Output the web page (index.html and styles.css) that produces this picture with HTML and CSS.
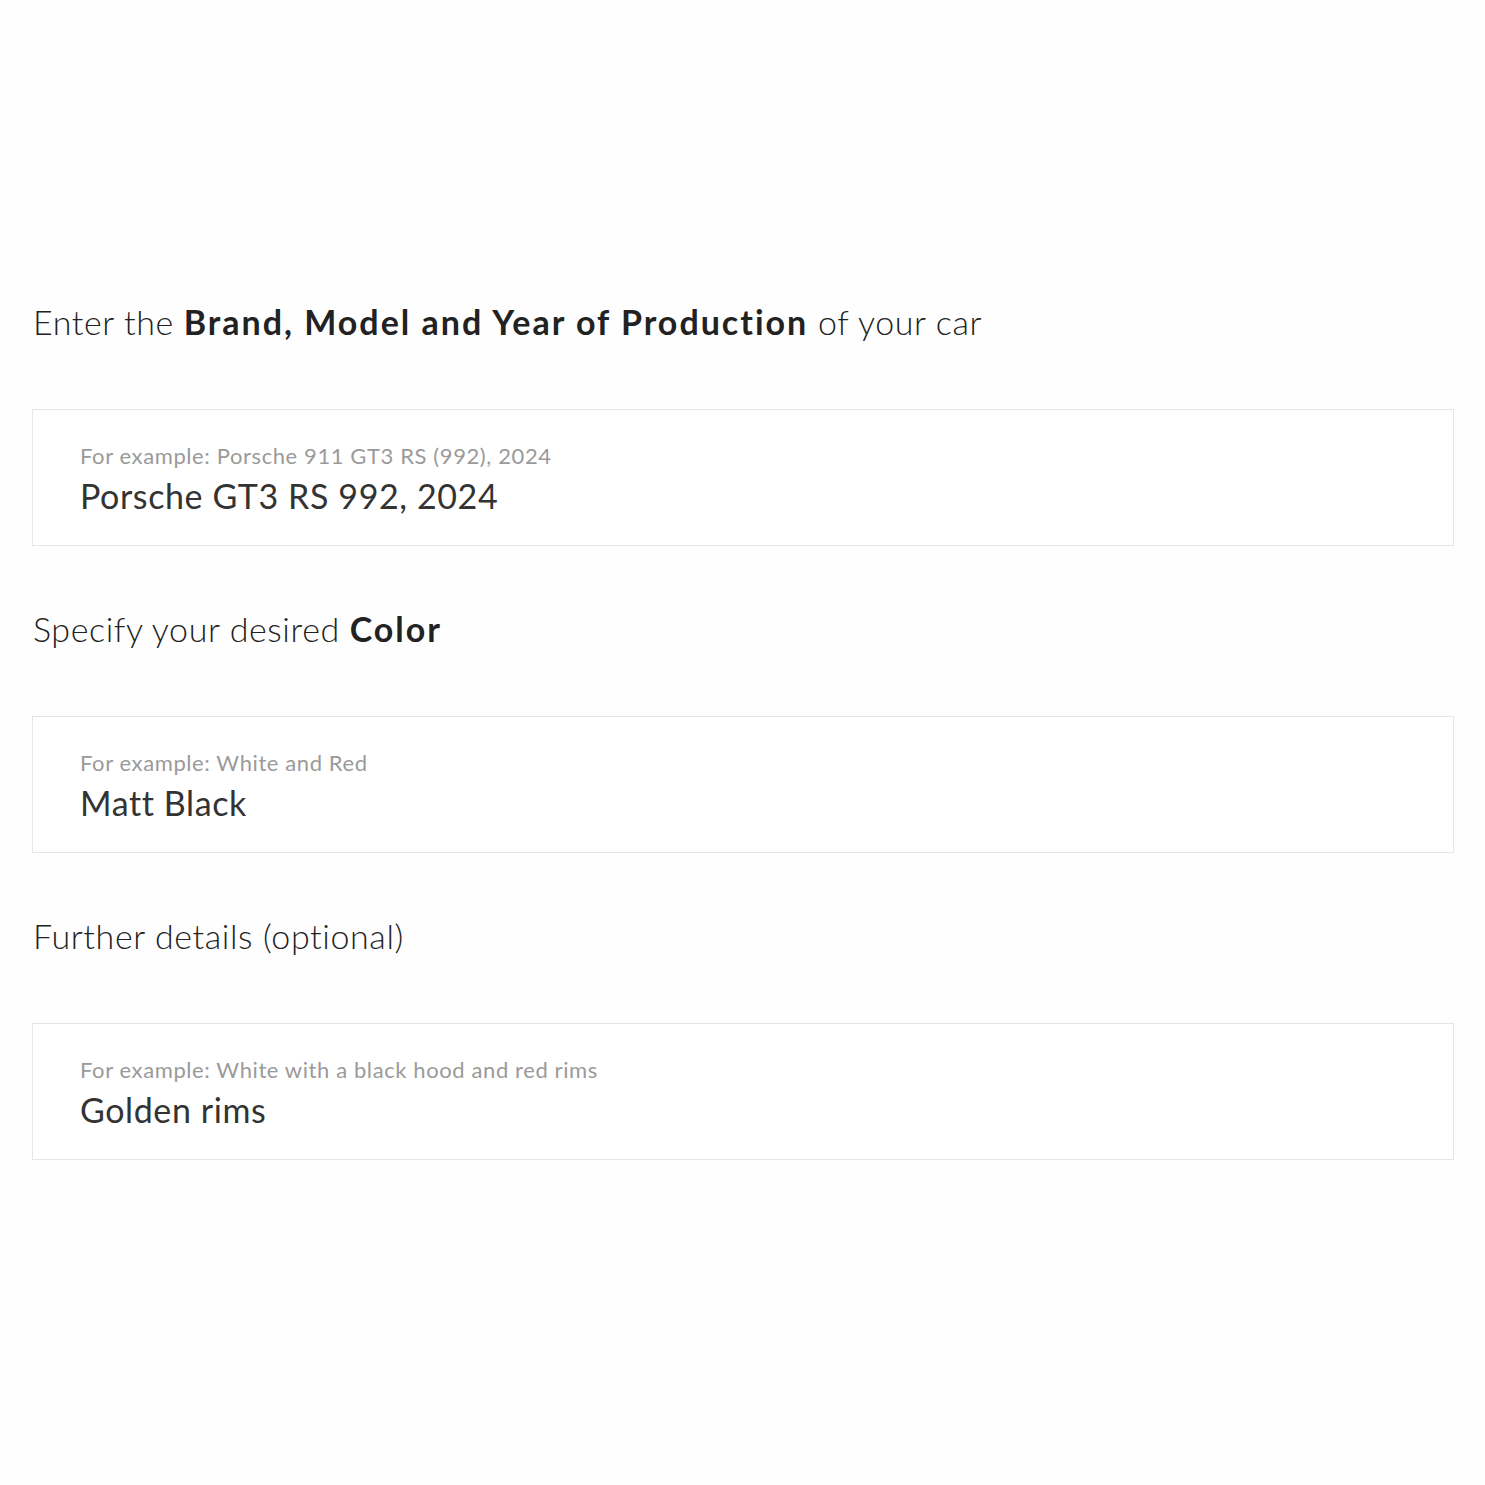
FILE: index.html
```html
<!DOCTYPE html>
<html lang="en">
<head>
    <meta charset="UTF-8">
    <meta name="viewport" content="width=device-width, initial-scale=1.0">
    <title>Car Configuration</title>
    <link rel="stylesheet" href="styles.css">
</head>
<body>

<div class="form-container">
    <div class="field">
        <h2 class="field-title">Enter the <strong>Brand, Model and Year of Production</strong> of your car</h2>
        <div class="field-box">
            <span class="field-hint">For example: Porsche 911 GT3 RS (992), 2024</span>
            <span class="field-value">Porsche GT3 RS 992, 2024</span>
        </div>
    </div>

    <div class="field">
        <h2 class="field-title">Specify your desired <strong>Color</strong></h2>
        <div class="field-box">
            <span class="field-hint">For example: White and Red</span>
            <span class="field-value">Matt Black</span>
        </div>
    </div>

    <div class="field">
        <h2 class="field-title">Further details (optional)</h2>
        <div class="field-box">
            <span class="field-hint">For example: White with a black hood and red rims</span>
            <span class="field-value">Golden rims</span>
        </div>
    </div>
</div>

</body>
</html>
```

FILE: styles.css
```css
body {
    font-family: Lato, "Noto Sans", sans-serif;
    margin: 0;
    background-color: #fefefe;
    color: #333;
}
.form-container {
    padding: 297px 31px 0 32px;
}
.field {
    margin-bottom: 58px;
}
.field-title {
    margin: 0 0 62px 1px;
    font-size: 34px;
    font-weight: 300;
    line-height: 50px;
    letter-spacing: 0.6px;
    color: #222;
}
.field-title strong {
    font-weight: 700;
    letter-spacing: 2px;
    color: #222;
}
.field-box {
    box-sizing: border-box;
    display: flex;
    flex-direction: column;
    height: 137px;
    padding: 31px 47px 0;
    border: 1px solid #e6e6e6;
    background: #fff;
}
.field-hint {
    font-size: 22px;
    font-weight: 400;
    line-height: 30px;
    letter-spacing: 0.6px;
    color: #9a9a9a;
}
.field-value {
    margin-top: 3px;
    font-size: 34px;
    font-weight: 400;
    line-height: 44px;
    letter-spacing: 0.6px;
    color: #333;
}
```
